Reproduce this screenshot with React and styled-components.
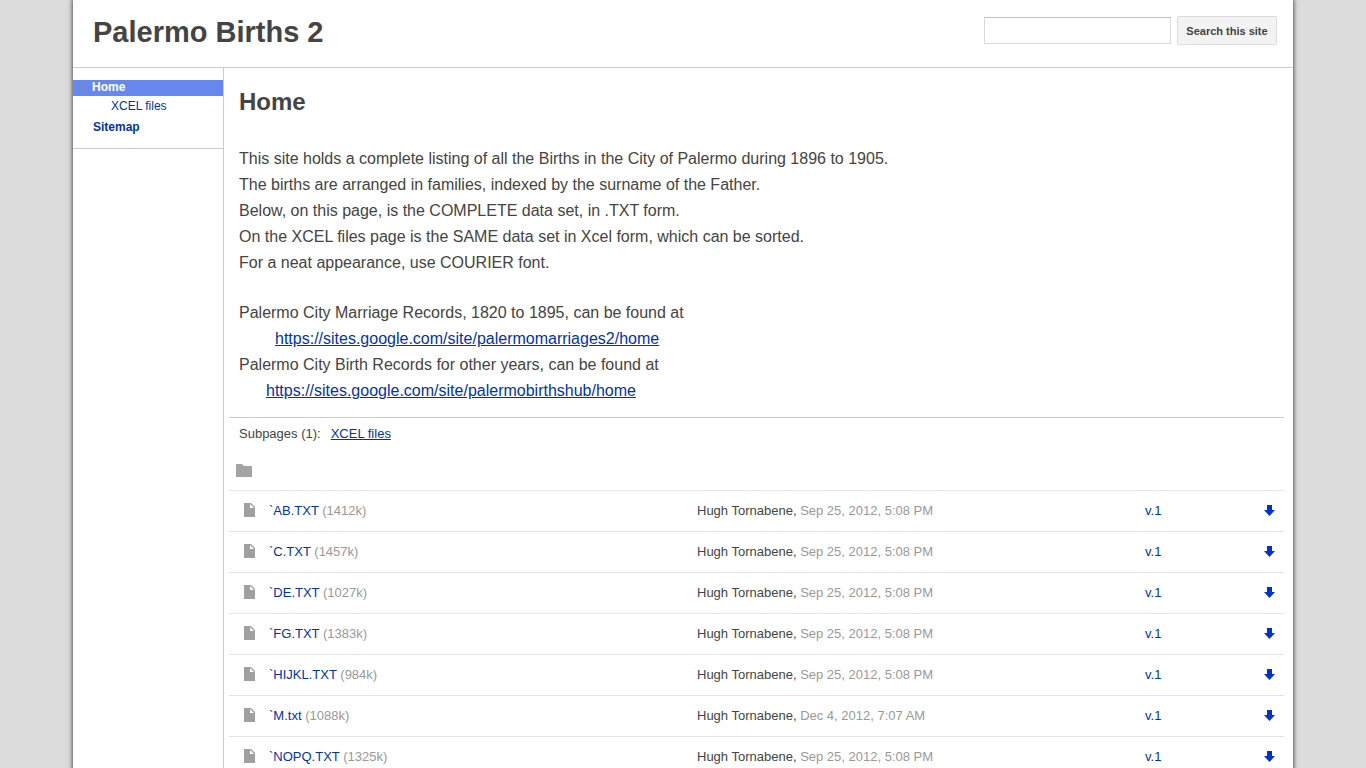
import React, { useState } from "react";
import styled, { createGlobalStyle } from 'styled-components';

const files = [
    { name: '`AB.TXT', size: '1412k', date: 'Sep 25, 2012, 5:08 PM' },
    { name: '`C.TXT', size: '1457k', date: 'Sep 25, 2012, 5:08 PM' },
    { name: '`DE.TXT', size: '1027k', date: 'Sep 25, 2012, 5:08 PM' },
    { name: '`FG.TXT', size: '1383k', date: 'Sep 25, 2012, 5:08 PM' },
    { name: '`HIJKL.TXT', size: '984k', date: 'Sep 25, 2012, 5:08 PM' },
    { name: '`M.txt', size: '1088k', date: 'Dec 4, 2012, 7:07 AM' },
    { name: '`NOPQ.TXT', size: '1325k', date: 'Sep 25, 2012, 5:08 PM' },
];

const FolderIcon = () => (
    <svg width="16" height="13" viewBox="0 0 16 13">
        <path d="M0 0 H6 L8 2 H16 V13 H0 Z" fill="#a3a3a3" />
    </svg>
);

const FileIcon = () => (
    <svg width="11" height="14" viewBox="0 0 11 14">
        <path d="M0 0 H7 L11 4 V14 H0 Z" fill="#a0a0a0" />
        <path d="M6 1 V5 H10 Z" fill="#fff" />
    </svg>
);

const DownloadIcon = () => (
    <svg width="11" height="11" viewBox="0 0 11 11">
        <path d="M3 0 H8 V5 H11 L5.5 11 L0 5 H3 Z" fill="#0033cc" />
    </svg>
);

const App = () => {

    const [query, setQuery] = useState('');

    return (
        <>
            <GlobalStyle />
            <PageStyle>
                <SheetStyle>

                    <HeaderStyle>
                        <TitleStyle>Palermo Births 2</TitleStyle>
                        <SearchStyle role="search" onSubmit={(e) => e.preventDefault()}>
                            <SearchInput
                                type="text"
                                aria-label="Search this site"
                                value={query}
                                onChange={(e) => setQuery(e.target.value)}
                            />
                            <SearchButton type="submit">Search this site</SearchButton>
                        </SearchStyle>
                    </HeaderStyle>

                    <BodyStyle>
                        <SidebarStyle>
                            <NavStyle>
                                <CurrentItem>
                                    <svg width="8" height="6" viewBox="0 0 8 6">
                                        <path d="M1 1 H7 L4 5 Z" fill="#7d86ae" />
                                    </svg>
                                    <a href="#home">Home</a>
                                </CurrentItem>
                                <SubItem><a href="#xcel">XCEL files</a></SubItem>
                                <NavItem><a href="#sitemap">Sitemap</a></NavItem>
                            </NavStyle>
                        </SidebarStyle>

                        <MainStyle>
                            <PageTitle>Home</PageTitle>

                            <TextStyle>
                                <p>This site holds a complete listing of all the Births in the City of Palermo during 1896 to 1905.</p>
                                <p>The births are arranged in families, indexed by the surname of the Father.</p>
                                <p>Below, on this page, is the COMPLETE data set, in .TXT form.</p>
                                <p>On the XCEL files page is the SAME data set in Xcel form, which can be sorted.</p>
                                <p>For a neat appearance, use COURIER font.</p>
                            </TextStyle>
                            <TextStyle>
                                <p>Palermo City Marriage Records, 1820 to 1895, can be found at</p>
                                <LinkLine $indent={36}>
                                    <a href="https://sites.google.com/site/palermomarriages2/home">https://sites.google.com/site/palermomarriages2/home</a>
                                </LinkLine>
                                <p>Palermo City Birth Records for other years, can be found at</p>
                                <LinkLine $indent={27}>
                                    <a href="https://sites.google.com/site/palermobirthshub/home">https://sites.google.com/site/palermobirthshub/home</a>
                                </LinkLine>
                            </TextStyle>

                            <SubpagesStyle>
                                <span>Subpages (1):</span>
                                <a href="#xcel">XCEL files</a>
                            </SubpagesStyle>

                            <FolderStyle><FolderIcon /></FolderStyle>

                            <FileTable>
                                <colgroup>
                                    <IconCol />
                                    <NameCol />
                                    <UpdatedCol />
                                    <VersionCol />
                                    <DownloadCol />
                                </colgroup>
                                <tbody>
                                    {files.map((file) => (
                                        <tr key={file.name}>
                                            <IconCell><FileIcon /></IconCell>
                                            <td><a href="#file">{file.name}</a> <Muted>({file.size})</Muted></td>
                                            <td>Hugh Tornabene, <Muted>{file.date}</Muted></td>
                                            <td><a href="#version">v.1</a></td>
                                            <td>
                                                <a href="#download" aria-label={`Download ${file.name}`}><DownloadIcon /></a>
                                            </td>
                                        </tr>
                                    ))}
                                </tbody>
                            </FileTable>
                        </MainStyle>
                    </BodyStyle>

                </SheetStyle>
            </PageStyle>
        </>
    )
}

const GlobalStyle = createGlobalStyle`
    * {
        box-sizing: border-box;
    }
    body {
        margin: 0;
        background: #dcdcdc;
        color: #444;
        font-family: Arial, "Liberation Sans", sans-serif;
        font-size: 13px;
    }
    h1, h2, p, ul {
        margin: 0;
        padding: 0;
    }
    a {
        color: #0033a8;
    }
    svg {
        display: block;
    }
`;

const PageStyle = styled.div`
    padding: 0 73px;
`;

const SheetStyle = styled.div`
    display: flex;
    flex-direction: column;
    min-height: 100vh;
    background: #fff;
    box-shadow: 0 0 4px 1px #555;
`;

const HeaderStyle = styled.header`
    display: flex;
    justify-content: space-between;
    align-items: center;
    height: 68px;
    padding: 0 16px 6px 20px;
    border-bottom: 1px solid #ccc;
`;

const TitleStyle = styled.h1`
    padding-top: 2px;
    font-size: 29px;
    line-height: 36px;
`;

const SearchStyle = styled.form`
    display: flex;
    align-items: center;
    gap: 6px;
`;

const SearchInput = styled.input`
    width: 187px;
    height: 27px;
    padding: 0 8px;
    border: 1px solid #d9d9d9;
    border-top-color: #c0c0c0;
    font: inherit;
`;

const SearchButton = styled.button`
    width: 100px;
    height: 29px;
    padding: 0;
    border: 1px solid #dcdcdc;
    border-radius: 2px;
    background: #f3f3f3;
    color: #444;
    font-family: inherit;
    font-size: 11px;
    font-weight: bold;
`;

const BodyStyle = styled.div`
    display: flex;
    flex: 1;
`;

const SidebarStyle = styled.aside`
    flex: 0 0 151px;
    border-right: 1px solid #ccc;
`;

const NavStyle = styled.ul`
    padding: 12px 0 10px;
    border-bottom: 1px solid #ccc;
    font-size: 12px;
    list-style: none;

    a {
        text-decoration: none;
    }
`;

const NavItem = styled.li`
    padding-left: 20px;
    line-height: 21px;
    font-weight: bold;
`;

const CurrentItem = styled(NavItem)`
    display: flex;
    align-items: center;
    gap: 5px;
    padding-left: 6px;
    background: #6688ee;
    line-height: 16px;

    a {
        color: #fff;
        line-height: 14px;
        padding-bottom: 2px;
    }
`;

const SubItem = styled(NavItem)`
    padding-left: 38px;
    font-weight: normal;
`;

const MainStyle = styled.main`
    flex: 1;
    min-width: 0;
    padding: 20px 9px 0 5px;
`;

const PageTitle = styled.h2`
    padding: 0 10px 30px;
    font-size: 24px;
    line-height: 28px;
`;

const TextStyle = styled.section`
    padding: 0 10px;
    font-size: 16px;
    line-height: 26px;

    & + & {
        margin-top: 24px;
    }
`;

const LinkLine = styled.p`
    padding-left: ${pr => pr.$indent}px;
`;

const SubpagesStyle = styled.div`
    display: flex;
    gap: 10px;
    margin-top: 13px;
    padding: 6px 10px;
    border-top: 1px solid #ccc;
    line-height: 20px;
`;

const FolderStyle = styled.div`
    padding: 14px 7px 13px;
`;

const FileTable = styled.table`
    width: 100%;
    border-collapse: separate;
    border-spacing: 0;
    table-layout: fixed;

    td {
        height: 41px;
        padding: 0 0 2px;
        border-top: 1px solid #e5e5e5;
        vertical-align: middle;
    }
    a {
        text-decoration: none;
    }
`;

const IconCol = styled.col`
    width: 40px;
`;

const NameCol = styled.col`
    width: auto;
`;

const UpdatedCol = styled.col`
    width: 448px;
`;

const VersionCol = styled.col`
    width: 119px;
`;

const DownloadCol = styled.col`
    width: 20px;
`;

const IconCell = styled.td`
    svg {
        margin-left: 15px;
    }
`;

const Muted = styled.span`
    color: #999;
`;

export default App;
